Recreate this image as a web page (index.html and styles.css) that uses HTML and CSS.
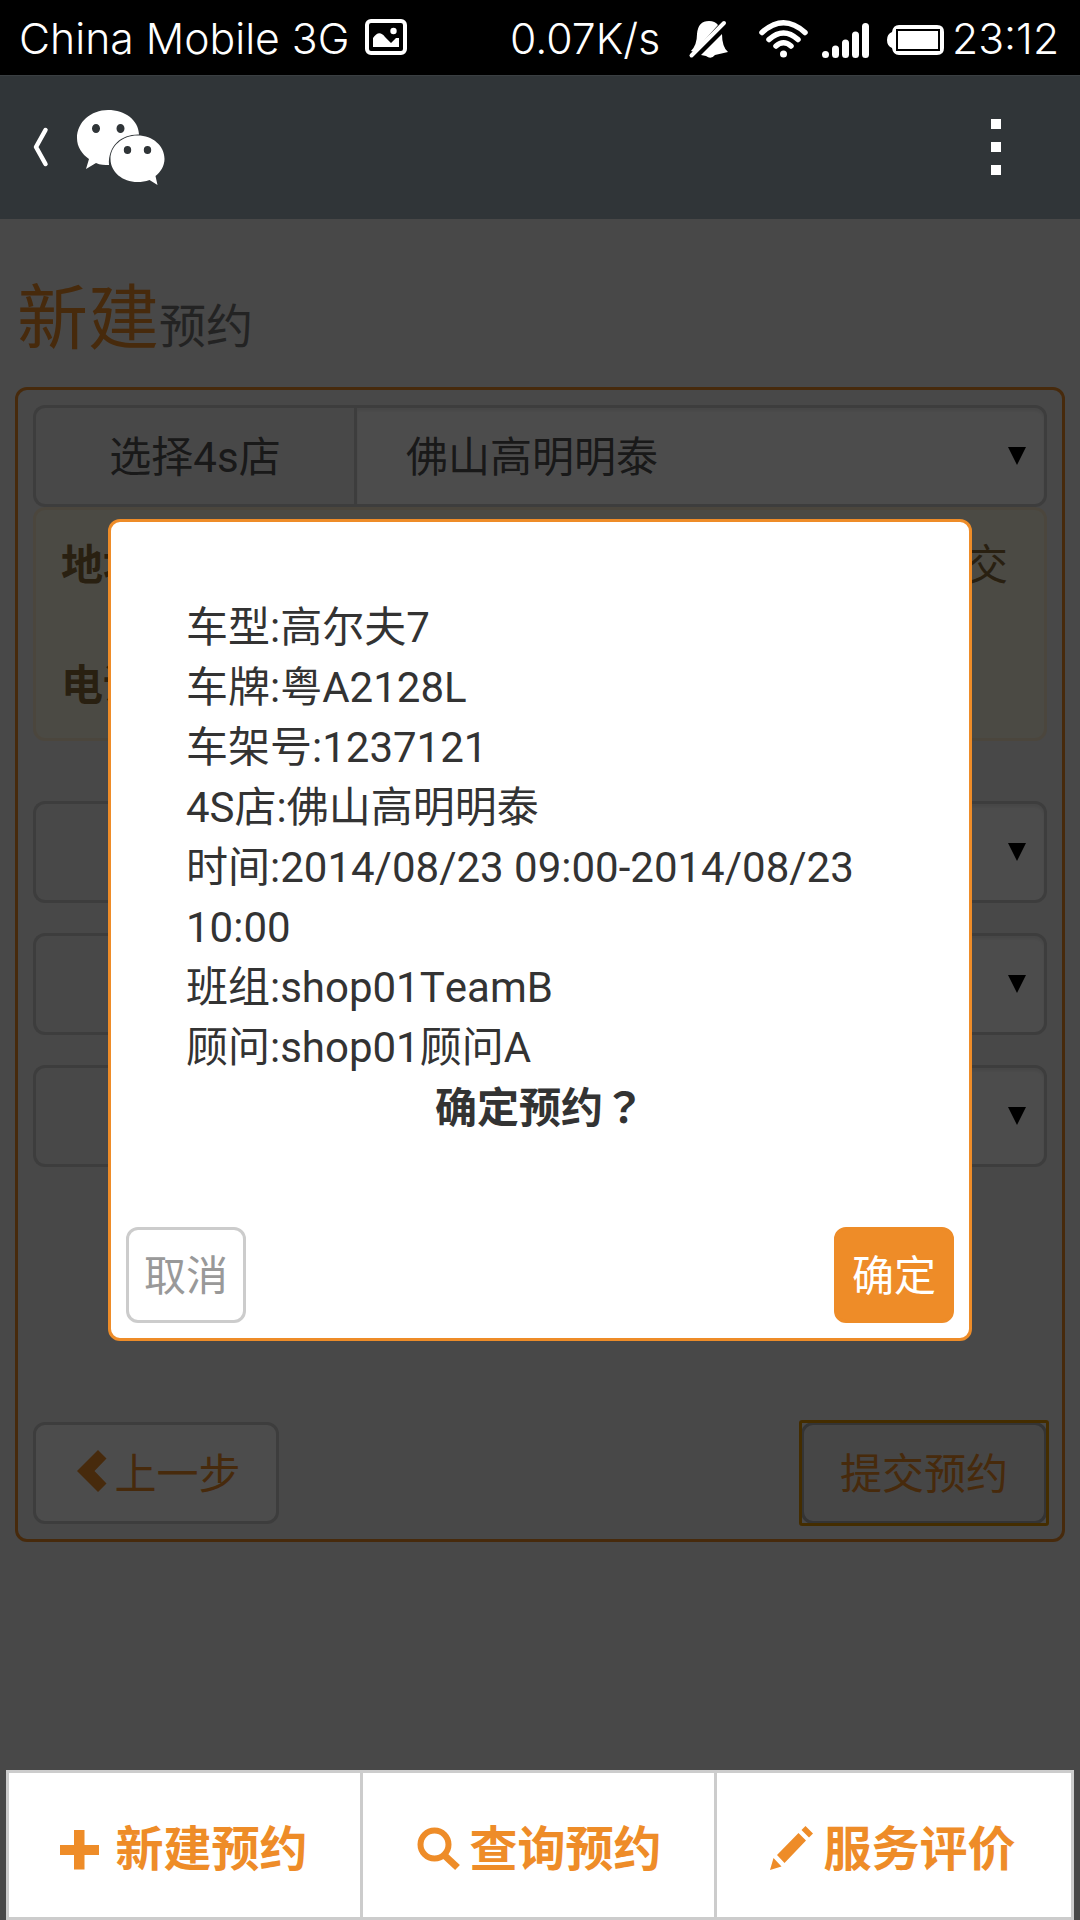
FILE: index.html
```html
<!DOCTYPE html>
<html lang="zh-CN">
<head>
<meta charset="utf-8">
<title>新建预约</title>
<link rel="stylesheet" href="styles.css">
</head>
<body>
<div class="phone">
  <div class="status">
    <span class="carrier">China Mobile 3G</span>
    <svg class="ic-picture" width="42" height="36" viewBox="0 0 42 36"><rect x="2" y="2" width="38" height="32" rx="4" fill="none" stroke="#fff" stroke-width="4"/><path fill="#fff" d="M8 28V19q6-9 12-1l6 6 5-5h3v9z"/><circle cx="28.500" cy="12" r="3.200" fill="#fff"/></svg>
    <span class="speed">0.07K/s</span>
    <svg class="ic-bell" width="39" height="38" viewBox="0 0 39 38"><path fill="#fff" d="M2 31Q8 25 8 14 9 1 20 1q6 0 9 4L5 32zM33 14q0 13 6 18l-13 3q-4 5-9 1l-5-1z"/><path d="M2.500 35.500 35 3" stroke="#fff" stroke-width="4" stroke-linecap="round"/></svg>
    <svg class="ic-wifi" width="49" height="38" viewBox="0 0 49 38"><g fill="none" stroke="#fff" stroke-width="5.500" stroke-linecap="round"><path d="M3 12.500Q24.500-7 46 12.500M10 19.500q14.500-13 29 0M17 26q7.500-6.500 15 0"/></g><circle cx="24.500" cy="34" r="3.500" fill="#fff"/></svg>
    <svg class="ic-signal" width="48" height="35" viewBox="0 0 48 35"><path d="M3.500 31.500v0M13.500 26v5.500M23.500 20v11.500M33.500 12v19.500M43.500 3.500v28" stroke="#fff" stroke-width="7" stroke-linecap="round"/></svg>
    <svg class="ic-battery" width="57" height="30" viewBox="0 0 57 30"><path fill="#fff" fill-rule="evenodd" d="M12 0h38q7 0 7 7v16q0 7-7 7H12q-6 0-7-7-5-2-5-8t5-8q1-7 7-7zM9 4v22h44V4z"/><path fill="#fff" d="M11 6h40v18H11z"/></svg>
    <span class="time">23:12</span>
  </div>
  <div class="titlebar">
    <svg width="16" height="40" viewBox="0 0 16 40"><path d="M13.500 3 4 20l9.500 17" fill="none" stroke="#fff" stroke-width="4.500" stroke-linecap="round" stroke-linejoin="round"/></svg>
    <svg class="wechat" width="88" height="75" viewBox="0 0 88 75"><path fill="#fff" fill-rule="evenodd" d="M31 0c17 0 30.500 10 31 24.500C45 24 31 35 32 55c-4 0-9 0-13-2L9 59l3-10C5 44 0 37 0 28 0 12 14 0 31 0zM19 14a4 4.500 0 1 0 .01 9 4 4.500 0 0 0-.01-9zM43.500 14a4 4.500 0 1 0 .01 9 4 4.500 0 0 0-.01-9z"/><path fill="#fff" fill-rule="evenodd" d="M60.500 25.500C76 25.500 87.500 36 87.500 49c0 7-4 13-9 17l2 9-8-5c-4 1.500-8 2-12 2-15 0-27-10-27-23s12-23.500 27-23.500zM50.500 36a3.700 4 0 1 0 .01 8 3.700 4 0 0 0-.01-8zM70.500 36a3.700 4 0 1 0 .01 8 3.700 4 0 0 0-.01-8z"/></svg>
    <span class="menu"><i></i><i></i><i></i></span>
  </div>
  <div class="page">
    <h1>新建<small>预约</small></h1>
    <div class="form">
      <div class="group">
        <span class="label">选择4s店</span>
        <span class="select">佛山高明明泰<i class="caret"></i></span>
      </div>
      <div class="alert">
        <div class="line tall"><b>地址</b><span>交</span></div>
        <div class="line"><b>电话</b></div>
      </div>
      <div class="rows">
        <div class="group"><span class="label"></span><span class="select"><i class="caret"></i></span></div>
        <div class="group"><span class="label"></span><span class="select"><i class="caret"></i></span></div>
        <div class="group"><span class="label"></span><span class="select"><i class="caret"></i></span></div>
      </div>
      <div class="actions">
        <span class="btn back"><svg class="prev" width="30" height="42" viewBox="0 0 30 42"><path fill="#ee8c28" d="M21 0 29.500 8.500 17.500 21l12 12.500L21 42 0 21z"/></svg>上一步</span>
        <span class="btn focused">提交预约</span>
      </div>
    </div>
    <div class="overlay">
      <div class="modal">
        <div class="message">
          <p>车型:高尔夫7</p>
          <p>车牌:粤A2128L</p>
          <p>车架号:1237121</p>
          <p>4S店:佛山高明明泰</p>
          <p>时间:2014/08/23 09:00-2014/08/23 10:00</p>
          <p>班组:shop01TeamB</p>
          <p>顾问:shop01顾问A</p>
          <p class="question">确定预约<span class="mark" lang="zh-TW">？</span></p>
        </div>
        <div class="modal-actions">
          <span class="mbtn cancel">取消</span>
          <span class="mbtn ok">确定</span>
        </div>
      </div>
    </div>
    <div class="nav">
      <div class="tab"><svg width="48" height="48" viewBox="0 0 48 48"><path fill="#ee8c28" d="M13 6h10.500v15H38v10H23.500v14.500H13V31H-1V21h14z"/></svg><span>新建预约</span></div>
      <div class="tab"><svg width="48" height="48" viewBox="0 0 48 48"><circle cx="19.500" cy="20.500" r="14" fill="none" stroke="#ee8c28" stroke-width="6"/><path d="m28.500 30.500 14 13" stroke="#ee8c28" stroke-width="7"/></svg><span>查询预约</span></div>
      <div class="tab"><svg width="48" height="48" viewBox="0 0 48 48"><path fill="#ee8c28" d="m1 46 3.500-12 8 8.500zM8 31 29.500 9l7.500 7.500L15.500 39zM32.500 6l4-4 7.500 7.500-4 4z"/></svg><span>服务评价</span></div>
    </div>
  </div>
</div>
</body>
</html>
```
FILE: styles.css
```css
* { box-sizing: border-box; margin: 0; padding: 0; }
body { width: 1080px; height: 1920px; overflow: hidden; font: 42px/60px Roboto, "Noto Sans CJK SC", sans-serif; font-kerning: none; color: #333; }
svg { display: block; flex: none; overflow: visible; }
.phone { height: 1920px; display: flex; flex-direction: column; }

.status { height: 75px; background: #000; color: #fff; display: flex; align-items: flex-start; font: 350 42.700px/75px Inter, sans-serif; white-space: nowrap; padding: 1px 20px 0 19px; }
.carrier { width: 346px; }
.speed { width: 179px; }
.ic-picture { margin: 18px 103px 0 0; }
.ic-bell { margin-top: 19px; margin-right: 31px; }
.ic-wifi { margin-top: 19px; margin-right: 14px; }
.ic-signal { margin-top: 22px; margin-right: 17px; }
.ic-battery { margin-top: 24px; margin-right: 8px; }

.titlebar { height: 144px; background: #303538; box-shadow: inset 0 1px #3a3f42; display: flex; align-items: center; padding: 0 79px 0 32px; }
.wechat { margin: 0 0 0 29px; }
.menu { margin-left: auto; display: flex; flex-direction: column; gap: 13px; }
.menu i { width: 10px; height: 10px; background: #fff; }

.page { position: relative; flex: 1; background: #f0f0f0; padding: 61px 15px 0; display: flex; flex-direction: column; }
h1 { font-size: 71px; line-height: 78px; font-weight: 400; color: #ee8c28; height: 107px; padding-left: 2px; }
h1 small { font-size: 47px; color: #777; }
.form { height: 1155px; border: 3px solid #ee8c28; border-radius: 12px; padding: 15px; display: flex; flex-direction: column; }
.group { height: 102px; display: flex; color: #555; }
.label { width: 321px; border: 3px solid #ccc; border-right: 0; border-radius: 12px 0 0 12px; display: flex; align-items: center; justify-content: center; padding-top: 3px; }
.select { flex: 1; background: #fff; border: 3px solid #ccc; border-radius: 0 12px 12px 0; box-shadow: inset 0 3px 3px rgba(0,0,0,.075); display: flex; align-items: center; padding: 3px 18px 0 49px; }
.caret { margin: 0 0 3px auto; border: 9px solid transparent; border-top: 18px solid #000; border-bottom: 0; }
.alert { height: 234px; background: #fcf8e3; border: 3px solid #faebcc; border-radius: 12px; color: #8a6d3b; padding: 26px 36px 0 25px; }
.line { display: flex; justify-content: space-between; height: 60px; }
.tall { height: 120px; }
.rows { display: flex; flex-direction: column; gap: 30px; padding-top: 60px; }
.actions { margin-top: auto; display: flex; justify-content: space-between; }
.btn { width: 246px; height: 102px; background: #fff; border: 3px solid #ccc; border-radius: 12px; color: #ee8c28; display: flex; align-items: center; justify-content: center; padding-top: 3px; }
.back { padding-left: 6px; }
.prev { margin: -8px 7px 0 0; }
.focused { position: relative; background: #ebebeb; border-color: #adadad; }
.focused::after { content: ""; position: absolute; inset: -5px; border: 3px solid #e59700; border-radius: 3px; }

.overlay { position: absolute; inset: 0; background: rgba(0,0,0,.7); padding: 300px 108px 0; }
.modal { height: 822px; background: #fff; border: 3px solid #ee8c28; border-radius: 12px; padding: 76px 15px 15px; display: flex; flex-direction: column; }
.message { padding: 0 60px; }
.question { text-align: center; font-weight: 700; padding-top: 1px; }
.mark { font-family: "Noto Sans CJK TC", sans-serif; line-height: 1; }
.modal-actions { margin-top: auto; display: flex; justify-content: space-between; }
.mbtn { width: 120px; height: 96px; border: 3px solid #ccc; border-radius: 12px; display: flex; align-items: center; justify-content: center; color: #999; padding-top: 3px; }
.ok { background: #ee8c28; border-color: #ee8c28; color: #fff; }

.nav { position: relative; margin: auto -9px 0; height: 150px; background: #fff; border: 3px solid #ccc; display: flex; font-size: 48px; font-weight: 700; color: #ee8c28; }
.tab { width: 354px; border-right: 3px solid #ccc; display: flex; align-items: center; justify-content: center; gap: 6px; padding-top: 5px; }
.tab span { padding-top: 4px; }
.tab:last-child { width: 351px; border-right: 0; }
```
